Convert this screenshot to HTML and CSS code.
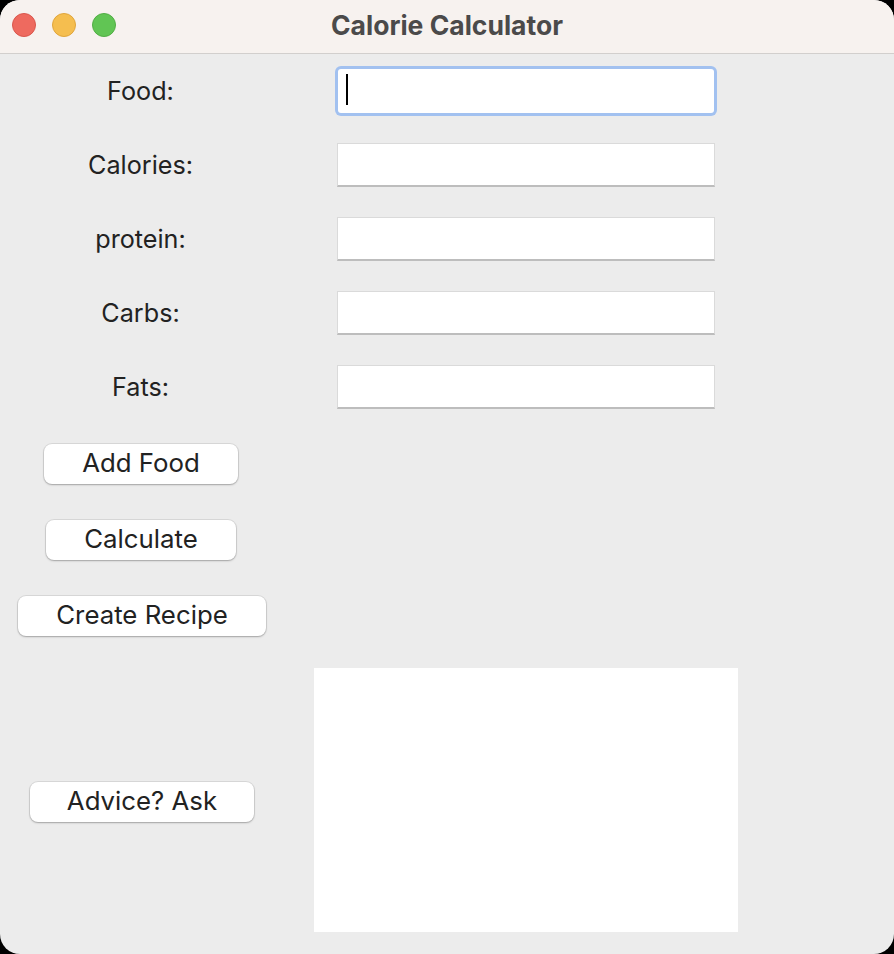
FILE: index.html
```html
<!DOCTYPE html>
<html>
<head>
<meta charset="utf-8">
<title>Calorie Calculator</title>
<link rel="stylesheet" href="styles.css">
</head>
<body>
<div class="window">
  <div class="titlebar">
    <div class="lights">
      <span class="light red"></span>
      <span class="light yellow"></span>
      <span class="light green"></span>
    </div>
    <div class="title">Calorie Calculator</div>
  </div>
  <div class="content">
    <div class="form">
      <div class="label">Food:</div>
      <div class="cell"><div class="entry focused"><span class="caret"></span></div></div>
      <div class="label">Calories:</div>
      <div class="cell"><div class="entry"></div></div>
      <div class="label">protein:</div>
      <div class="cell"><div class="entry"></div></div>
      <div class="label">Carbs:</div>
      <div class="cell"><div class="entry"></div></div>
      <div class="label">Fats:</div>
      <div class="cell"><div class="entry"></div></div>
    </div>
    <div class="actions">
      <div class="btn-row"><button class="btn btn-add">Add Food</button></div>
      <div class="btn-row"><button class="btn btn-calc">Calculate</button></div>
      <div class="btn-row"><button class="btn btn-recipe">Create Recipe</button></div>
    </div>
    <div class="advice">
      <div class="advice-btn-cell"><button class="btn btn-advice">Advice? Ask</button></div>
      <div class="advice-text-cell"><div class="textarea"></div></div>
    </div>
  </div>
</div>
</body>
</html>
```

FILE: styles.css
```css
* { box-sizing: border-box; }
html, body {
  margin: 0;
  padding: 0;
  background: #000;
}
.window {
  width: 894px;
  height: 954px;
  background: #ececec;
  border-radius: 20px;
  overflow: hidden;
  font-family: Inter, "Noto Sans", sans-serif;
  color: #222;
}
.titlebar {
  height: 54px;
  background: #f7f2ef;
  border-bottom: 1px solid #d2cfcd;
  display: flex;
  align-items: center;
  justify-content: center;
  position: relative;
}
.lights {
  position: absolute;
  left: 12px;
  top: 13px;
  display: flex;
  gap: 16px;
}
.light {
  width: 24px;
  height: 24px;
  border-radius: 50%;
  display: block;
}
.red { background: #ee6a5f; border: 1px solid #d9574d; }
.yellow { background: #f5be4f; border: 1px solid #dfa53c; }
.green { background: #61c554; border: 1px solid #52ad45; }
.title {
  font-weight: 700;
  font-size: 26.5px;
  color: #4b4a4a;
  margin-top: -4px;
}
.content {
  display: flex;
  flex-direction: column;
}
.form {
  display: grid;
  grid-template-columns: 281px 490px;
  grid-auto-rows: 74px;
}
.label {
  display: flex;
  align-items: center;
  justify-content: center;
  font-size: 25.2px;
}
.cell {
  display: flex;
  align-items: center;
  justify-content: center;
}
.entry {
  width: 378px;
  height: 44px;
  background: #fff;
  border: 1px solid #dadada;
  border-bottom: 2px solid #bdbdbd;
  position: relative;
}
.entry.focused {
  border: none;
  width: 376px;
  height: 44px;
  box-shadow: 0 0 0 3px #a2c1f0;
  border-radius: 3px;
}
.caret {
  position: absolute;
  left: 8px;
  top: 5px;
  width: 2px;
  height: 31px;
  background: #000;
}
.actions {
  margin-top: 2px;
  display: flex;
  flex-direction: column;
  width: 281px;
}
.btn-row {
  height: 76px;
  display: flex;
  align-items: center;
  justify-content: center;
}
.btn {
  font-family: Inter, "Noto Sans", sans-serif;
  font-size: 25.8px;
  color: #222;
  background: #fff;
  border: none;
  border-radius: 8px;
  height: 40px;
  padding: 0 0 3px 0;
  box-shadow: 0 0 0 1px rgba(0,0,0,0.08), 0 1px 2px rgba(0,0,0,0.25);
}
.btn-add { width: 194px; margin-left: 1px; }
.btn-calc { width: 190px; margin-left: 1px; }
.btn-recipe { width: 248px; margin-left: 3px; }
.btn-advice { width: 224px; margin-left: 3px; }
.advice {
  margin-top: 14px;
  display: grid;
  grid-template-columns: 281px 490px;
  height: 264px;
}
.advice-btn-cell {
  display: flex;
  align-items: center;
  justify-content: center;
  padding-top: 4px;
}
.advice-text-cell {
  display: flex;
  justify-content: center;
}
.textarea {
  width: 424px;
  height: 264px;
  background: #fff;
}
```
